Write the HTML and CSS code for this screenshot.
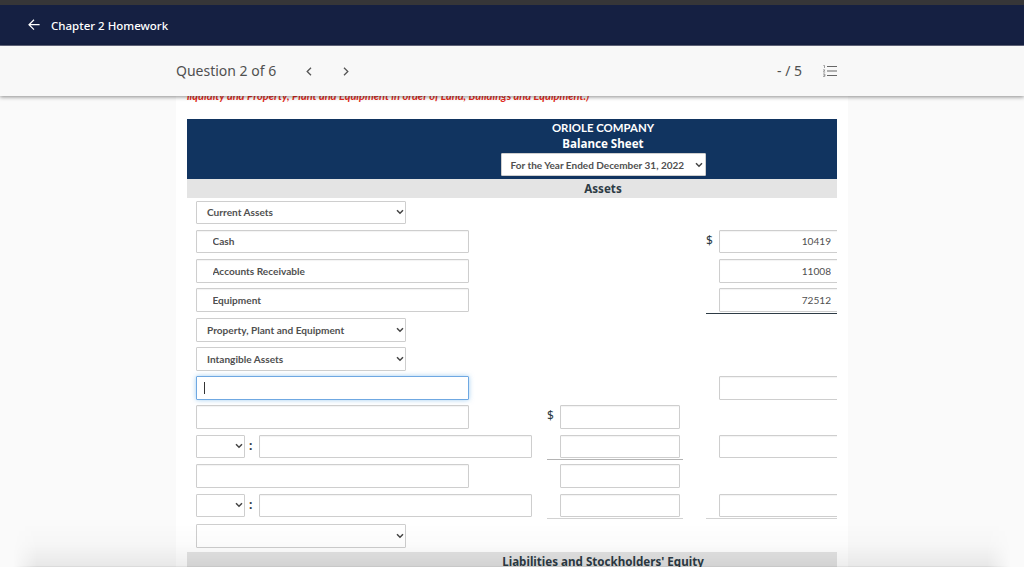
FILE: index.html
```
<!DOCTYPE html>
<html lang="en">
<head>
  <meta charset="UTF-8">
  <meta name="viewport" content="width=device-width, initial-scale=1.0">
  <title>Chapter 2 Homework</title>
  <link rel="stylesheet" href="styles.css">
</head>
<body>
  <svg class="sprite" width="0" height="0">
    <symbol id="caret-down" viewBox="0 0 8 6"><path d="M1 1.2 L4 4.2 L7 1.2" fill="none" stroke="#444" stroke-width="1.5"/></symbol>
  </svg>

  <header class="top-bar">
    <svg class="back" width="12" height="12" viewBox="0 0 12 12"><path d="M6 0.8 L1 5.7 L6 10.6 M1 5.7 H11.6" fill="none" stroke="#fff" stroke-width="1.2"/></svg>
    <span class="top-title">Chapter 2 Homework</span>
  </header>

  <nav class="question-bar">
    <span class="question">Question 2 of 6</span>
    <svg class="prev" width="6" height="9" viewBox="0 0 6 9"><path d="M5 0.8 L1.2 4.5 L5 8.2" fill="none" stroke="#555" stroke-width="1.3"/></svg>
    <svg class="next" width="6" height="9" viewBox="0 0 6 9"><path d="M1 0.8 L4.8 4.5 L1 8.2" fill="none" stroke="#555" stroke-width="1.3"/></svg>
    <span class="score">- / 5</span>
    <svg class="list" width="14" height="12" viewBox="0 0 14 12">
      <path d="M4 1.5 H14 M4 6 H14 M4 10.5 H14" stroke="#666" stroke-width="1.2"/>
      <path d="M0.4 0.5 H1.5 V3 M0 4.9 H1.9 L0.4 7.1 H2.2 M0 9 H1.9 V11.4 H0 M0.7 10.2 H1.9" fill="none" stroke="#777" stroke-width="0.7"/>
    </svg>
  </nav>

  <main class="content">
    <p class="hint">liquidity and Property, Plant and Equipment in order of Land, Buildings and Equipment.)</p>

    <div class="sheet">
      <div class="sheet-head">
        <div class="company">ORIOLE COMPANY</div>
        <div class="statement">Balance Sheet</div>
        <div class="select period">
          <span>For the Year Ended December 31, 2022</span>
          <svg width="8" height="6"><use href="#caret-down"/></svg>
        </div>
      </div>
      <div class="section">Assets</div>

      <div class="rows">
        <div class="row">
          <div class="label"><div class="select"><span>Current Assets</span><svg width="8" height="6"><use href="#caret-down"/></svg></div></div>
        </div>
        <div class="row">
          <div class="label"><input class="field" type="text" value="Cash"></div>
          <div class="total"><span class="dollar">$</span><input class="amount" type="text" value="10419"></div>
        </div>
        <div class="row">
          <div class="label"><input class="field tall" type="text" value="Accounts Receivable"></div>
          <div class="total"><input class="amount tall" type="text" value="11008"></div>
        </div>
        <div class="row">
          <div class="label"><input class="field tall" type="text" value="Equipment"></div>
          <div class="total sum dark"><input class="amount tall" type="text" value="72512"></div>
        </div>
        <div class="row">
          <div class="label"><div class="select tall"><span>Property, Plant and Equipment</span><svg width="8" height="6"><use href="#caret-down"/></svg></div></div>
        </div>
        <div class="row">
          <div class="label"><div class="select tall"><span>Intangible Assets</span><svg width="8" height="6"><use href="#caret-down"/></svg></div></div>
        </div>
        <div class="row">
          <div class="label"><div class="field tall active"><span class="cursor"></span></div></div>
          <div class="total"><input class="amount tall" type="text"></div>
        </div>
        <div class="row">
          <div class="label"><input class="field tall" type="text"></div>
          <div class="sub"><span class="dollar">$</span><input class="amount tall" type="text"></div>
        </div>
        <div class="row">
          <div class="label">
            <div class="select mini"><span></span><svg width="8" height="6"><use href="#caret-down"/></svg></div>
            <span class="colon">:</span>
            <input class="field" type="text">
          </div>
          <div class="sub sum mid"><input class="amount" type="text"></div>
          <div class="total"><input class="amount" type="text"></div>
        </div>
        <div class="row">
          <div class="label"><input class="field tall" type="text"></div>
          <div class="sub"><input class="amount tall" type="text"></div>
        </div>
        <div class="row">
          <div class="label">
            <div class="select mini"><span></span><svg width="8" height="6"><use href="#caret-down"/></svg></div>
            <span class="colon">:</span>
            <input class="field" type="text">
          </div>
          <div class="sub sum"><input class="amount" type="text"></div>
          <div class="total sum"><input class="amount" type="text"></div>
        </div>
        <div class="row">
          <div class="label"><div class="select tall"><span></span><svg width="8" height="6"><use href="#caret-down"/></svg></div></div>
        </div>
      </div>

      <div class="section">Liabilities and Stockholders' Equity</div>
    </div>
  </main>

  <div class="bottom-shade"></div>
</body>
</html>
```

FILE: styles.css
```
* {
  box-sizing: border-box;
}

body {
  margin: 0;
  height: 567px;
  overflow: hidden;
  display: flex;
  flex-direction: column;
  background-color: #fafafa;
  font-family: Lato, sans-serif;
  color: #2d3b45;
}

.sprite {
  position: absolute;
}

.top-bar {
  flex: none;
  height: 46px;
  display: flex;
  align-items: center;
  padding-left: 28px;
  gap: 11px;
  background-color: #152042;
  border-top: 5px solid #363638;
  border-bottom: 1px solid #686d85;
  color: #fff;
  font: 500 11.5px "Noto Sans", sans-serif;
}

.top-title {
  padding-top: 1px;
}

.question-bar {
  flex: none;
  z-index: 1;
  height: 50px;
  display: flex;
  align-items: center;
  padding-left: 176px;
  background-color: #f8f8f8;
  box-shadow: 0 1px 4px rgba(0, 0, 0, 0.45);
  font: 14px "Noto Sans", sans-serif;
  color: #505050;
}

.question,
.score {
  padding-bottom: 2px;
}

.question {
  width: 130px;
}

.next {
  margin-left: 31px;
}

.score {
  margin-left: 428px;
  width: 46px;
}

.content {
  flex: none;
  width: 672px;
  height: 471px;
  margin-left: 176px;
  padding-left: 11px;
  overflow: hidden;
  background-color: #fff;
}

.hint {
  margin: -8px 0 0;
  height: 31px;
  font: italic bold 11px/16px Lato, sans-serif;
  color: #e32b20;
  white-space: nowrap;
}

.sheet {
  width: 650px;
  overflow: hidden;
}

.sheet-head {
  height: 60px;
  padding-left: 182px;
  display: flex;
  flex-direction: column;
  align-items: center;
  background-color: #113460;
  color: #fff;
}

.company {
  height: 17px;
  font: bold 11.4px/17px Lato, sans-serif;
}

.statement {
  height: 17px;
  font: bold 11.6px/16px "Noto Sans", sans-serif;
}

.section {
  height: 19px;
  padding-left: 182px;
  text-align: center;
  background-color: #e4e4e4;
  font: bold 11.6px/19px "Noto Sans", sans-serif;
}

.rows {
  display: grid;
  grid-template-rows: 29px 29px 29px 30px 29px 29px 29px 30px 29px 30px 30px 31px;
}

.row {
  display: grid;
  grid-template-columns: 360px 136px 23px 131px;
  align-items: start;
}

.label,
.sub,
.total {
  display: flex;
  align-items: flex-start;
  padding-top: 3px;
}

.label {
  grid-column: 1;
  padding-left: 9px;
}

.sub {
  grid-column: 2;
  padding-left: 13px;
}

.total {
  grid-column: 4;
  padding-left: 13px;
  overflow: hidden;
}

.sum {
  height: 28px;
  border-bottom: 1px solid #d2d2d2;
}

.sum.mid {
  border-color: #b4b4b4;
}

.sum.dark {
  height: 29px;
  border-color: #2d3b45;
}

.field,
.amount,
.select {
  flex: none;
  height: 23px;
  border: 1px solid #cecece;
  border-radius: 1px;
  background-color: #fff;
  font: bold 10.1px Lato, sans-serif;
  color: #505050;
}

.field.tall,
.amount.tall,
.select.tall {
  height: 24px;
}

.field {
  width: 273px;
  padding: 0 15px 1px 15.5px;
  box-shadow: inset 0 1px 1px rgba(0, 0, 0, 0.05);
}

.amount {
  width: 120px;
  padding: 0 7px 1px;
  text-align: right;
  font-weight: normal;
  box-shadow: inset 0 1px 1px rgba(0, 0, 0, 0.05);
}

.select {
  width: 210px;
  display: flex;
  align-items: center;
  justify-content: space-between;
  padding: 0 1px 1px 10px;
}

.select.mini {
  width: 49px;
}

.select.period {
  width: 205px;
  height: 23px;
  padding: 0 2px 0 9px;
  font-size: 10px;
}

.active {
  padding: 5px 7px;
  border-color: #6fa8e2;
  box-shadow: 0 0 5px rgba(102, 175, 233, 0.6);
}

.cursor {
  display: block;
  width: 1px;
  height: 12px;
  background-color: #333;
}

.dollar {
  flex: none;
  width: 13px;
  margin-left: -13px;
  font: 12px/22px "Noto Sans", sans-serif;
}

.colon {
  width: 14px;
  padding-left: 4px;
  font: bold 12px/21px "Noto Sans", sans-serif;
}

/* shade of the toolbar docked under the page */
.bottom-shade {
  position: absolute;
  z-index: 2;
  left: 13px;
  right: 13px;
  bottom: 0;
  height: 44px;
  border-bottom: 1px solid rgba(0, 0, 0, 0.12);
  background: linear-gradient(rgba(0, 0, 0, 0), rgba(0, 0, 0, 0.015) 50%, rgba(0, 0, 0, 0.07));
  mask-image: linear-gradient(to right, transparent, #000 24px, #000 calc(100% - 24px), transparent);
}
```
